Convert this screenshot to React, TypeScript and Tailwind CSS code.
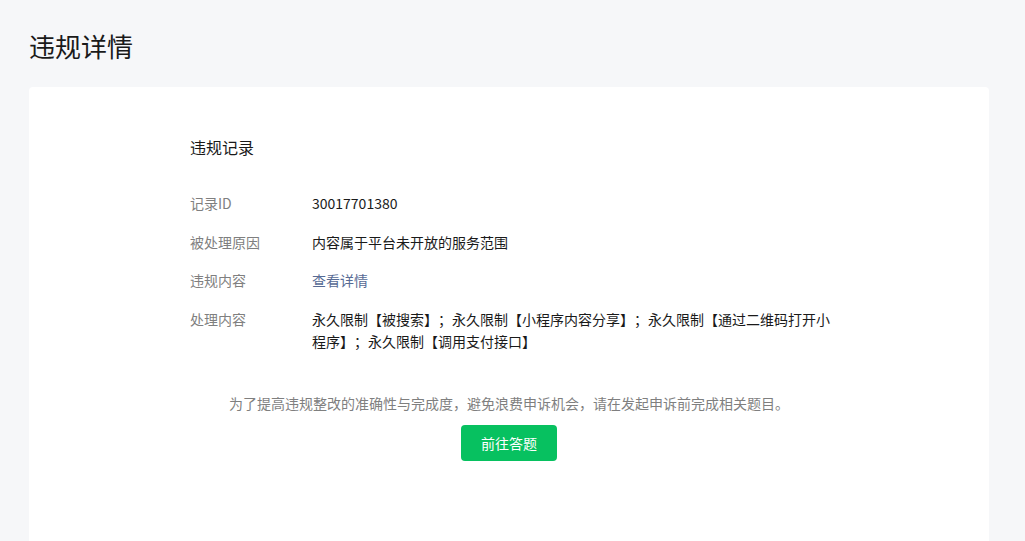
import React from 'react';

const rows: { label: string; value: React.ReactNode }[] = [
  { label: '记录ID', value: '30017701380' },
  { label: '被处理原因', value: '内容属于平台未开放的服务范围' },
  {
    label: '违规内容',
    value: <a className="text-[#576b95] cursor-pointer">查看详情</a>,
  },
  {
    label: '处理内容',
    value:
      '永久限制【被搜索】；永久限制【小程序内容分享】；永久限制【通过二维码打开小程序】；永久限制【调用支付接口】',
  },
];

const App = () => {
  return (
    <div
      className="min-h-screen bg-[#f6f7f9] pl-[29px] pt-[29px] overflow-hidden [text-spacing-trim:space-all]"
      style={{ fontFamily: '"Noto Sans CJK SC", "Noto Sans", sans-serif' }}
    >
      <h1 className="text-[26px] leading-[34px] text-[#1a1a1a] font-normal">违规详情</h1>

      <div className="mt-[24px] w-[960px] h-[480px] bg-white rounded-[4px] pt-[48px]">
        <div className="w-[646px] ml-[161px]">
          <h2 className="text-[16px] leading-[24px] text-[#1a1a1a] font-normal">违规记录</h2>

          <div className="mt-[33px] flex flex-col gap-[16.7px] text-[14px] leading-[22px]">
            {rows.map((row) => (
              <div key={row.label} className="flex">
                <div className="w-[122px] shrink-0 text-[#7f7f7f]">{row.label}</div>
                <div className="w-[524px] text-[#1a1a1a]">{row.value}</div>
              </div>
            ))}
          </div>
        </div>

        <div className="mt-[40px] flex flex-col items-center">
          <p className="text-[14px] leading-[22px] text-[#7f7f7f]">
            为了提高违规整改的准确性与完成度，避免浪费申诉机会，请在发起申诉前完成相关题目。
          </p>
          <button className="mt-[11px] w-[96px] h-[36px] rounded-[4px] bg-[#07c160] text-white text-[14px]">
            前往答题
          </button>
        </div>
      </div>
    </div>
  );
};

export default App;
